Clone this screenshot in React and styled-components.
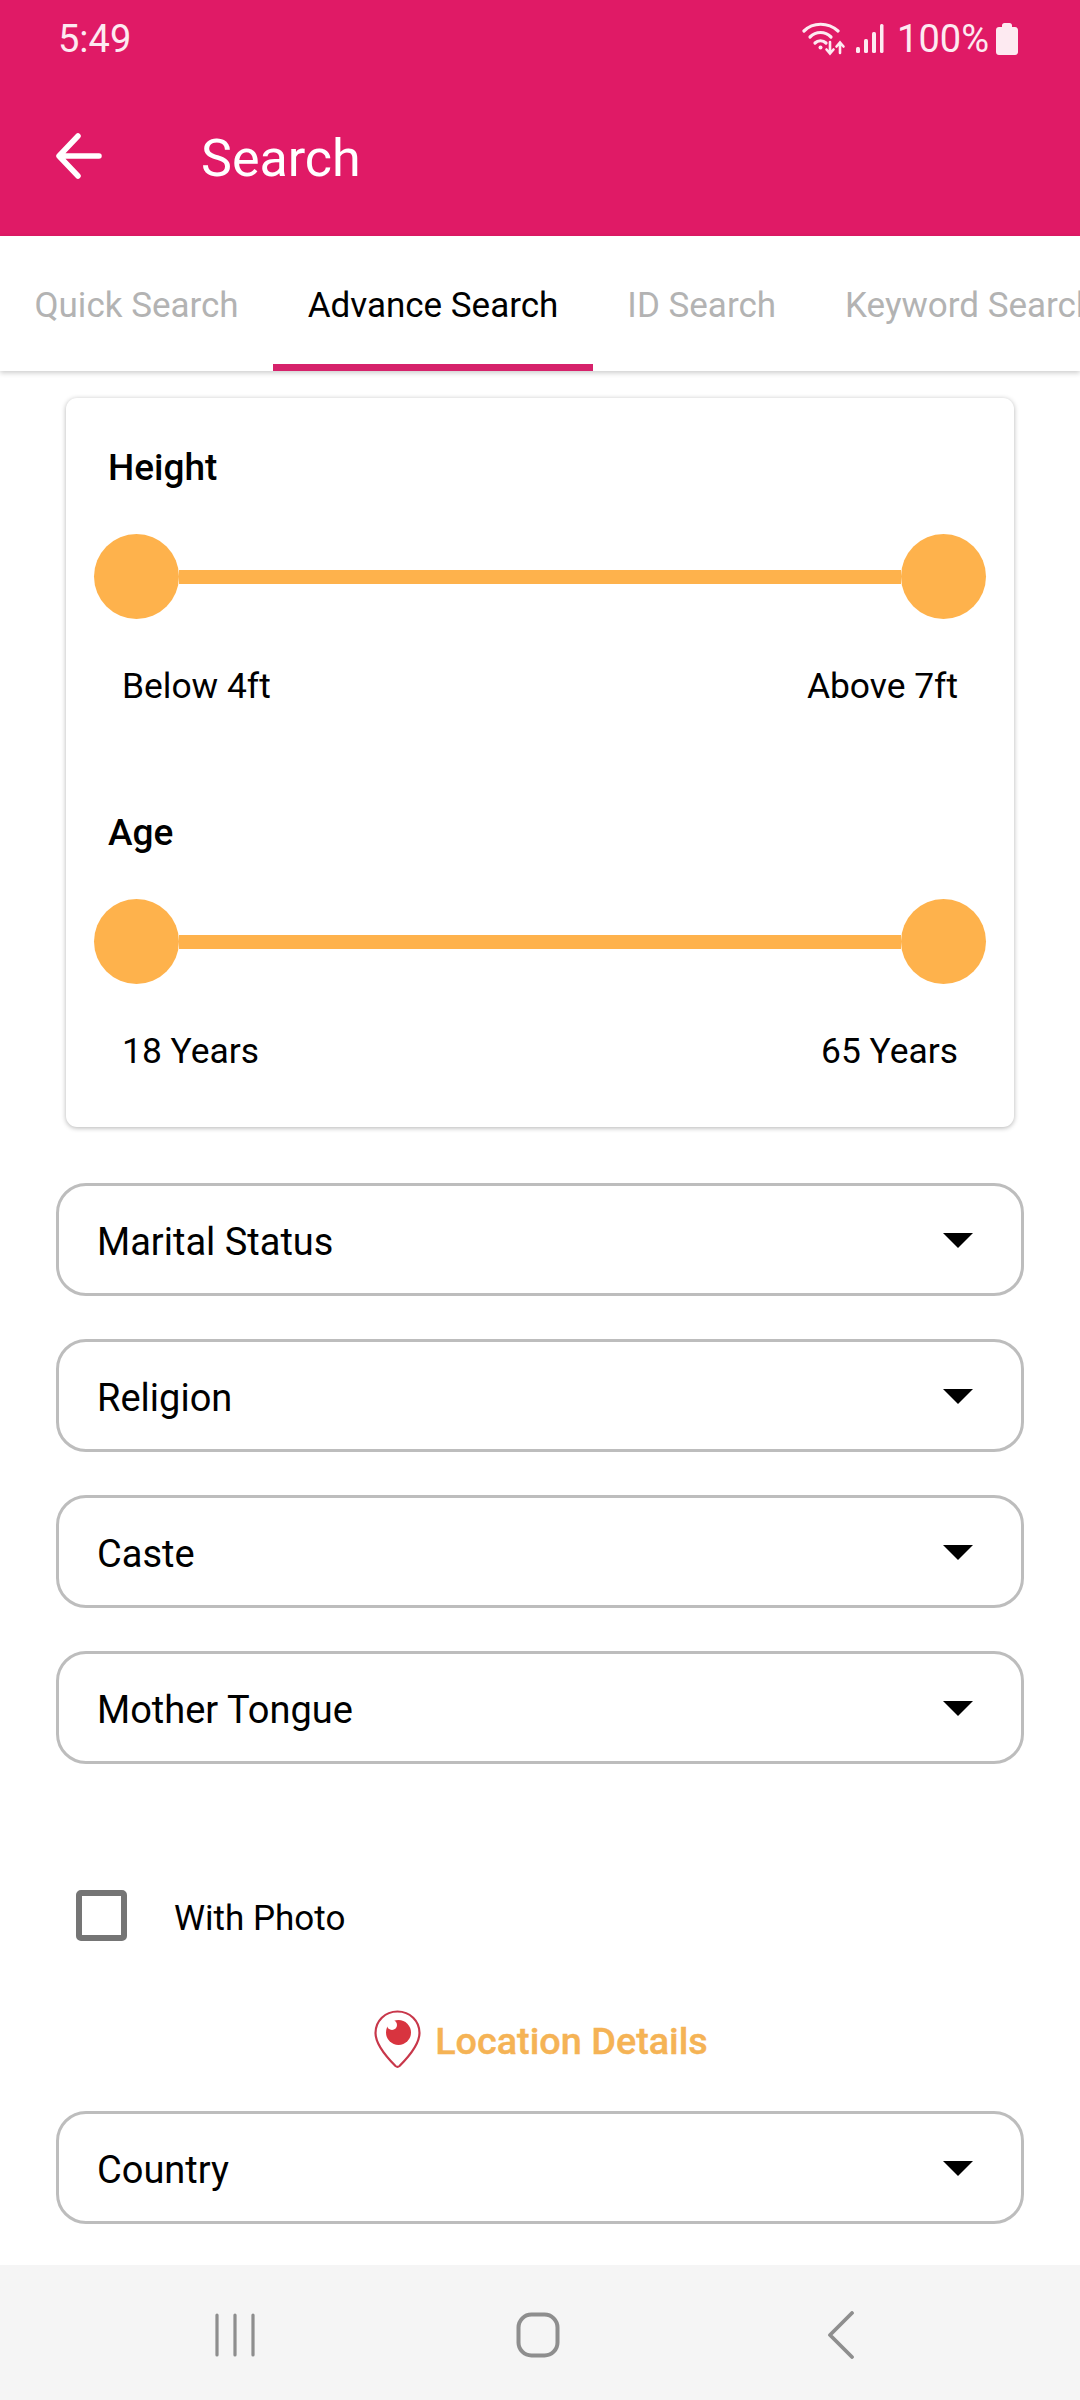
import React from 'react';
import styled, { createGlobalStyle } from 'styled-components';

const Global = createGlobalStyle`
  html, body { margin: 0; padding: 0; background: #fff; }
  * { box-sizing: border-box; }
  #root { width: 1080px; height: 2400px; }
`;
const Screen = styled.div`
  width: 1080px; height: 2400px; display: flex; flex-direction: column;
  font-family: Roboto, "Liberation Sans", sans-serif; color: #000; background: #fff; overflow: hidden;
`;
const Header = styled.header`
  height: 236px; background: #e01a66; color: #fff; flex: none;
`;
const StatusBar = styled.div`
  height: 76px; display: flex; align-items: center; justify-content: space-between;
  padding: 2px 62px 0 58px; color: #fdeaf1;
`;
const Time = styled.span`font-size: 38px; line-height: 74px;`;
const StatusIcons = styled.div`display: flex; align-items: center;`;
const Percent = styled.span`font-size: 38px; margin: 0 7px 0 13px; line-height: 74px;`;
const Toolbar = styled.div`
  height: 160px; display: flex; align-items: center; padding: 0 0 0 56px;
`;
const Title = styled.h1`
  margin: 6px 0 0 99px; font-size: 52px; font-weight: 400; line-height: 60px;
`;
const Tabs = styled.nav`
  height: 135px; flex: none; display: flex; overflow: hidden; background: #fff;
  box-shadow: 0 2px 5px rgba(0,0,0,.2); position: relative; z-index: 1;
`;
const Tab = styled.div`
  flex: none; height: 135px; padding: 0 34.500px;
  font-size: 35px; line-height: 139px;
  color: ${p => p.$active ? '#000' : '#b3b3b3'};
  position: relative;
  &::after {
    content: ''; position: absolute; left: 0; right: 0; bottom: 0; height: 7px;
    background: ${p => p.$active ? '#d6226b' : 'transparent'};
  }
`;
const Main = styled.main`
  flex: 1; min-height: 0; overflow: hidden; background: #fff; padding: 27px 56px 0;
`;
const Card = styled.section`
  margin: 0 10px; padding: 48px 28px 57px; background: #fff; border-radius: 11px;
  box-shadow: 0 1px 5px rgba(0,0,0,.3);
`;
const SliderLabel = styled.h2`
  margin: ${p => p.$top || 0}px 0 0 14px; padding-top: 2px; font-size: 37px; line-height: 40px; font-weight: 500;
`;
const Slider = styled.div`
  margin-top: 46px; display: flex; align-items: center;
`;
const Thumb = styled.div`
  width: 85px; height: 85px; border-radius: 50%; background: #feb24c; flex: none;
`;
const Track = styled.div`flex: 1; height: 14px; background: #feb24c;`;
const RangeRow = styled.div`
  margin-top: 44px; padding: 2px 28px 0; height: 42px; display: flex; justify-content: space-between;
  font-size: 35.400px; line-height: 42px;
`;
const Selects = styled.div`
  margin-top: 56px; display: flex; flex-direction: column; gap: 43px;
`;
const Select = styled.div`
  height: 113px; border: 3px solid #bdbdbd; border-radius: 30px; display: flex; align-items: center;
  justify-content: space-between; padding: 5px 48px 0 38px; font-size: 38px; background: #fff;
`;
const Caret = styled.span`
  width: 0; height: 0; border-left: 15px solid transparent; border-right: 15px solid transparent;
  border-top: 15px solid #000; margin-top: -3px;
`;
const CheckRow = styled.label`
  margin: 126px 0 0 20px; display: flex; align-items: center; gap: 47px; font-size: 35px; height: 51px;
`;
const Box = styled.span`
  width: 51px; height: 51px; border: 6px solid #757575; border-radius: 5px; flex: none;
`;
const CheckText = styled.span`padding-top: 5px;`;
const LocationRow = styled.div`
  margin: 69px 0 43px; height: 58px; display: flex; align-items: center; justify-content: center; gap: 14px;
  padding-left: 2px; font-size: 37.800px; font-weight: 500; color: #f5b355;
`;
const LocationText = styled.span`padding-top: 4px; -webkit-text-stroke: .4px #f5b355;`;
const NavBar = styled.footer`
  height: 135px; flex: none; background: #f5f5f5; display: flex; align-items: center; justify-content: space-between;
  padding: 5px 225px 0 213px;
`;
const HomeSlot = styled.span`display: flex; margin-right: 9px;`;

const Wifi = () => (
  <svg width="44" height="36" viewBox="0 0 44 36" fill="none" stroke="#fdeaf1" strokeWidth="3.200" strokeLinecap="round">
    <path d="M2 10C11 1 26 1 36 10" />
    <path d="M8 16C14 10 23 10 29 16" />
    <path d="M13 22c3-3 8-3 11 0" />
    <circle cx="18.500" cy="26.500" r="2" fill="#fdeaf1" stroke="none" />
    <path d="M28 21v11m-3.500-3.500 3.500 4 3.500-4" strokeWidth="2.600" />
    <path d="M38 32V22m-3.500 3.500 3.500-4 3.500 4" strokeWidth="2.600" />
  </svg>
);
const Signal = () => (
  <svg width="28" height="30" viewBox="0 0 28 30" fill="#fdeaf1" style={{ marginLeft: 10 }}>
    <rect x="0" y="23" width="4" height="6" rx="1.500" />
    <rect x="8" y="15" width="4" height="14" rx="1.500" />
    <rect x="16" y="8" width="4" height="21" rx="1.500" />
    <rect x="24" y="0" width="3.500" height="29" rx="1.500" />
  </svg>
);
const Battery = () => (
  <svg width="22" height="32" viewBox="0 0 22 32" fill="#fdeaf1">
    <path d="M6 2.500C6 1 7 0 8.500 0h5C15 0 16 1 16 2.500V4h3c1.700 0 3 1.300 3 3v22c0 1.700-1.300 3-3 3H3c-1.700 0-3-1.300-3-3V7c0-1.700 1.300-3 3-3h3z" />
  </svg>
);
const BackArrow = () => (
  <svg width="46" height="46" viewBox="0 0 46 46" fill="none" stroke="#fff" strokeWidth="5.500" strokeLinecap="round" strokeLinejoin="round" style={{ flex: 'none' }}>
    <path d="M43 23H4M22 3 3 23l19 20" />
  </svg>
);
const Pin = () => (
  <svg width="47" height="58" viewBox="0 0 47 58" fill="none">
    <path d="M23.500 1.500C11 1.500 1.500 11 1.500 23c0 11 11 24 20 33 1.200 1 2.800 1 4 0 9-9 20-22 20-33C45.500 11 36 1.500 23.500 1.500z" stroke="#c8374a" strokeWidth="2.200" />
    <circle cx="24.500" cy="22.500" r="12.500" fill="#d8343f" />
    <circle cx="18" cy="15" r="5" fill="#fff" />
  </svg>
);
const MenuIcon = () => (
  <svg width="44" height="44" viewBox="0 0 44 44" fill="none" stroke="#8e8e8e" strokeWidth="3.200" strokeLinecap="round">
    <path d="M4 2v40M22 2v40M40 2v40" />
  </svg>
);
const HomeIcon = () => (
  <svg width="44" height="46" viewBox="0 0 44 46" fill="none" stroke="#8e8e8e" strokeWidth="4">
    <rect x="2.500" y="2.500" width="39" height="41" rx="13" />
  </svg>
);
const NavBack = () => (
  <svg width="28" height="48" viewBox="0 0 28 48" fill="none" stroke="#8e8e8e" strokeWidth="3.800" strokeLinecap="round" strokeLinejoin="round">
    <path d="M25 2 3 24l22 22" />
  </svg>
);

const RangeSlider = () => (
  <Slider><Thumb /><Track /><Thumb /></Slider>
);
const selects = ['Marital Status', 'Religion', 'Caste', 'Mother Tongue'];

export default function App() {
  return (
    <Screen>
      <Global />
      <Header>
        <StatusBar>
          <Time>5:49</Time>
          <StatusIcons><Wifi /><Signal /><Percent>100%</Percent><Battery /></StatusIcons>
        </StatusBar>
        <Toolbar><BackArrow /><Title>Search</Title></Toolbar>
      </Header>
      <Tabs>
        <Tab>Quick Search</Tab>
        <Tab $active>Advance Search</Tab>
        <Tab>ID Search</Tab>
        <Tab>Keyword Search</Tab>
      </Tabs>
      <Main>
        <Card>
          <SliderLabel>Height</SliderLabel>
          <RangeSlider />
          <RangeRow><span>Below 4ft</span><span>Above 7ft</span></RangeRow>
          <SliderLabel $top={106}>Age</SliderLabel>
          <RangeSlider />
          <RangeRow><span>18 Years</span><span>65 Years</span></RangeRow>
        </Card>
        <Selects>
          {selects.map(s => <Select key={s}>{s}<Caret /></Select>)}
        </Selects>
        <CheckRow><Box /><CheckText>With Photo</CheckText></CheckRow>
        <LocationRow><Pin /><LocationText>Location Details</LocationText></LocationRow>
        <Select>Country<Caret /></Select>
      </Main>
      <NavBar><MenuIcon /><HomeSlot><HomeIcon /></HomeSlot><NavBack /></NavBar>
    </Screen>
  );
}
